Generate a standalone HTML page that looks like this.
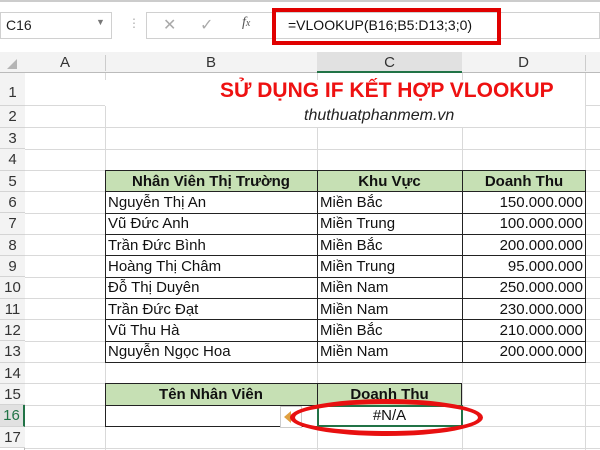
<!DOCTYPE html>
<html><head><meta charset="utf-8"><style>
body{margin:0;width:600px;height:450px;overflow:hidden;background:#fff;font-family:"Liberation Sans",Arial,sans-serif;position:relative}
.a{position:absolute}
.rn{position:absolute;left:0;width:25px;background:#f3f3f3;color:#333;font-size:15px;text-align:center;border-bottom:1px solid #d4d4d4;box-sizing:border-box}
.hl{position:absolute;height:1px;background:#d9d9d9;left:25px;width:575px}
.vl{position:absolute;width:1px;background:#d9d9d9;top:73px;height:377px}
.c{position:absolute;font-size:15px;color:#111;white-space:nowrap;box-sizing:border-box;line-height:21px}
</style></head><body>
<div class="a" style="left:0;top:0;width:600px;height:52px;background:#fff"></div>
<div class="a" style="left:0;top:0;width:600px;height:2px;background:#ccc"></div>
<div class="a" style="left:0;top:12px;width:112px;height:27px;border:1px solid #d0d0d0;background:#fff;box-sizing:border-box"></div>
<div class="a" style="left:6px;top:17px;font-size:14px;color:#222">C16</div>
<div class="a" style="left:96px;top:17px;font-size:9px;color:#777">▼</div>
<div class="a" style="left:128px;top:16px;font-size:12px;color:#aaa">⋮</div>
<div class="a" style="left:146px;top:12px;width:454px;height:27px;border:1px solid #d0d0d0;box-sizing:border-box"></div>
<div class="a" style="left:163px;top:15px;font-size:16px;color:#aaa">✕</div>
<div class="a" style="left:200px;top:15px;font-size:16px;color:#aaa">✓</div>
<div class="a" style="left:242px;top:15px;font-size:14px;color:#555;font-family:'Liberation Serif',serif;font-style:italic">f<span style="font-size:10px">x</span></div>
<div class="a" style="left:272px;top:8px;width:229px;height:37px;border:4px solid #e00000;box-sizing:border-box"></div>
<div class="a" style="left:288px;top:17px;font-size:14px;color:#111">=VLOOKUP(B16;B5:D13;3;0)</div>
<div class="a" style="left:0;top:52px;width:600px;height:21px;background:#f3f3f3;border-bottom:1px solid #bbb;box-sizing:border-box"></div>
<div class="a" style="left:317px;top:52px;width:145px;height:21px;background:#e1e1e1;border-bottom:2px solid #217346;box-sizing:border-box"></div>
<div class="a" style="left:7px;top:59px;width:0;height:0;border-left:10px solid transparent;border-bottom:10px solid #b5b5b5"></div>
<div class="a" style="left:25px;top:52px;width:80px;text-align:center;font-size:15px;line-height:21px;color:#333">A</div>
<div class="a" style="left:105px;top:52px;width:212px;text-align:center;font-size:15px;line-height:21px;color:#333">B</div>
<div class="a" style="left:317px;top:52px;width:145px;text-align:center;font-size:15px;line-height:21px;color:#333">C</div>
<div class="a" style="left:462px;top:52px;width:123px;text-align:center;font-size:15px;line-height:21px;color:#333">D</div>
<div class="a" style="left:105px;top:55px;width:1px;height:16px;background:#ccc"></div>
<div class="a" style="left:585px;top:55px;width:1px;height:16px;background:#ccc"></div>
<div class="vl" style="left:105px"></div><div class="vl" style="left:317px"></div><div class="vl" style="left:462px"></div><div class="vl" style="left:585px"></div>
<div class="a" style="left:24px;top:73px;width:1px;height:377px;background:#bbb"></div>
<div class="rn" style="top:73px;height:33px;line-height:40px">1</div><div class="hl" style="top:105px"></div>
<div class="rn" style="top:106px;height:22px;line-height:22px">2</div><div class="hl" style="top:127px"></div>
<div class="rn" style="top:128px;height:21px;line-height:22px">3</div><div class="hl" style="top:149px"></div>
<div class="rn" style="top:149px;height:22px;line-height:22px">4</div><div class="hl" style="top:170px"></div>
<div class="rn" style="top:171px;height:21px;line-height:22px">5</div><div class="hl" style="top:191px"></div>
<div class="rn" style="top:192px;height:21px;line-height:22px">6</div><div class="hl" style="top:213px"></div>
<div class="rn" style="top:213px;height:22px;line-height:22px">7</div><div class="hl" style="top:234px"></div>
<div class="rn" style="top:235px;height:21px;line-height:22px">8</div><div class="hl" style="top:255px"></div>
<div class="rn" style="top:256px;height:21px;line-height:22px">9</div><div class="hl" style="top:277px"></div>
<div class="rn" style="top:277px;height:22px;line-height:22px">10</div><div class="hl" style="top:298px"></div>
<div class="rn" style="top:299px;height:21px;line-height:22px">11</div><div class="hl" style="top:319px"></div>
<div class="rn" style="top:320px;height:21px;line-height:22px">12</div><div class="hl" style="top:341px"></div>
<div class="rn" style="top:341px;height:22px;line-height:22px">13</div><div class="hl" style="top:362px"></div>
<div class="rn" style="top:363px;height:21px;line-height:22px">14</div><div class="hl" style="top:383px"></div>
<div class="rn" style="top:384px;height:21px;line-height:22px">15</div><div class="hl" style="top:405px"></div>
<div class="rn" style="top:405px;height:22px;line-height:22px;color:#217346;background:#e1e1e1;border-right:2px solid #217346">16</div><div class="hl" style="top:426px"></div>
<div class="rn" style="top:427px;height:21px;line-height:22px">17</div><div class="hl" style="top:448px"></div>
<div class="a" style="left:105px;top:80px;width:480px;height:26px;background:#fff"></div>
<div class="a" style="left:220px;top:79px;font-size:21px;font-weight:bold;color:#ee1111;white-space:nowrap">SỬ DỤNG IF KẾT HỢP VLOOKUP</div>
<div class="a" style="left:106px;top:106px;width:478px;height:21px;background:#fff"></div>
<div class="a" style="left:304px;top:107px;font-size:16px;font-style:italic;color:#222">thuthuatphanmem.vn</div>
<div class="a" style="left:105px;top:171px;width:481px;height:21px;background:#c6e0b4"></div>
<div class="a" style="left:105px;top:192px;width:481px;height:171px;background:#fff"></div>
<div class="a" style="left:105px;top:170px;width:481px;height:193px;border:1.5px solid #222;box-sizing:border-box"></div>
<div class="a" style="left:317px;top:170px;width:1px;height:193px;background:#222"></div>
<div class="a" style="left:462px;top:170px;width:1px;height:193px;background:#222"></div>
<div class="a" style="left:105px;top:191px;width:481px;height:1px;background:#222"></div>
<div class="a" style="left:105px;top:213px;width:481px;height:1px;background:#222"></div>
<div class="a" style="left:105px;top:234px;width:481px;height:1px;background:#222"></div>
<div class="a" style="left:105px;top:255px;width:481px;height:1px;background:#222"></div>
<div class="a" style="left:105px;top:277px;width:481px;height:1px;background:#222"></div>
<div class="a" style="left:105px;top:298px;width:481px;height:1px;background:#222"></div>
<div class="a" style="left:105px;top:319px;width:481px;height:1px;background:#222"></div>
<div class="a" style="left:105px;top:341px;width:481px;height:1px;background:#222"></div>
<div class="c" style="left:105px;top:171px;width:212px;text-align:center;font-weight:bold">Nhân Viên Thị Trường</div>
<div class="c" style="left:317px;top:171px;width:145px;text-align:center;font-weight:bold">Khu Vực</div>
<div class="c" style="left:462px;top:171px;width:124px;text-align:center;font-weight:bold">Doanh Thu</div>
<div class="c" style="left:108px;top:192px">Nguyễn Thị An</div><div class="c" style="left:320px;top:192px">Miền Bắc</div><div class="c" style="left:462px;top:192px;width:121px;text-align:right">150.000.000</div>
<div class="c" style="left:108px;top:213px">Vũ Đức Anh</div><div class="c" style="left:320px;top:213px">Miền Trung</div><div class="c" style="left:462px;top:213px;width:121px;text-align:right">100.000.000</div>
<div class="c" style="left:108px;top:235px">Trần Đức Bình</div><div class="c" style="left:320px;top:235px">Miền Bắc</div><div class="c" style="left:462px;top:235px;width:121px;text-align:right">200.000.000</div>
<div class="c" style="left:108px;top:256px">Hoàng Thị Châm</div><div class="c" style="left:320px;top:256px">Miền Trung</div><div class="c" style="left:462px;top:256px;width:121px;text-align:right">95.000.000</div>
<div class="c" style="left:108px;top:277px">Đỗ Thị Duyên</div><div class="c" style="left:320px;top:277px">Miền Nam</div><div class="c" style="left:462px;top:277px;width:121px;text-align:right">250.000.000</div>
<div class="c" style="left:108px;top:299px">Trần Đức Đạt</div><div class="c" style="left:320px;top:299px">Miền Nam</div><div class="c" style="left:462px;top:299px;width:121px;text-align:right">230.000.000</div>
<div class="c" style="left:108px;top:320px">Vũ Thu Hà</div><div class="c" style="left:320px;top:320px">Miền Bắc</div><div class="c" style="left:462px;top:320px;width:121px;text-align:right">210.000.000</div>
<div class="c" style="left:108px;top:341px">Nguyễn Ngọc Hoa</div><div class="c" style="left:320px;top:341px">Miền Nam</div><div class="c" style="left:462px;top:341px;width:121px;text-align:right">200.000.000</div>
<div class="a" style="left:105px;top:384px;width:357px;height:21px;background:#c6e0b4"></div>
<div class="a" style="left:106px;top:405px;width:211px;height:21px;background:#fff"></div>
<div class="a" style="left:105px;top:383px;width:357px;height:44px;border:1.5px solid #222;box-sizing:border-box"></div>
<div class="a" style="left:317px;top:383px;width:1px;height:44px;background:#222"></div>
<div class="a" style="left:105px;top:405px;width:357px;height:1px;background:#222"></div>
<div class="a" style="left:317px;top:405px;width:146px;height:22px;background:#fff;border:2px solid #217346;box-sizing:border-box"></div>
<div class="c" style="left:105px;top:384px;width:212px;text-align:center;font-weight:bold">Tên Nhân Viên</div>
<div class="c" style="left:317px;top:384px;width:145px;text-align:center;font-weight:bold">Doanh Thu</div>
<div class="c" style="left:317px;top:405px;width:145px;text-align:center">#N/A</div>
<div class="a" style="left:280px;top:406px;width:22px;height:22px;background:#fff;border:1px solid #ccc;box-sizing:border-box"></div>
<div class="a" style="left:284px;top:411px;width:0;height:0;border-top:6px solid transparent;border-bottom:6px solid transparent;border-right:7px solid #e0a040"></div>
<div class="a" style="left:290px;top:399px;width:193px;height:37px;border:5px solid #e81010;border-radius:50%;box-sizing:border-box"></div>
</body></html>
